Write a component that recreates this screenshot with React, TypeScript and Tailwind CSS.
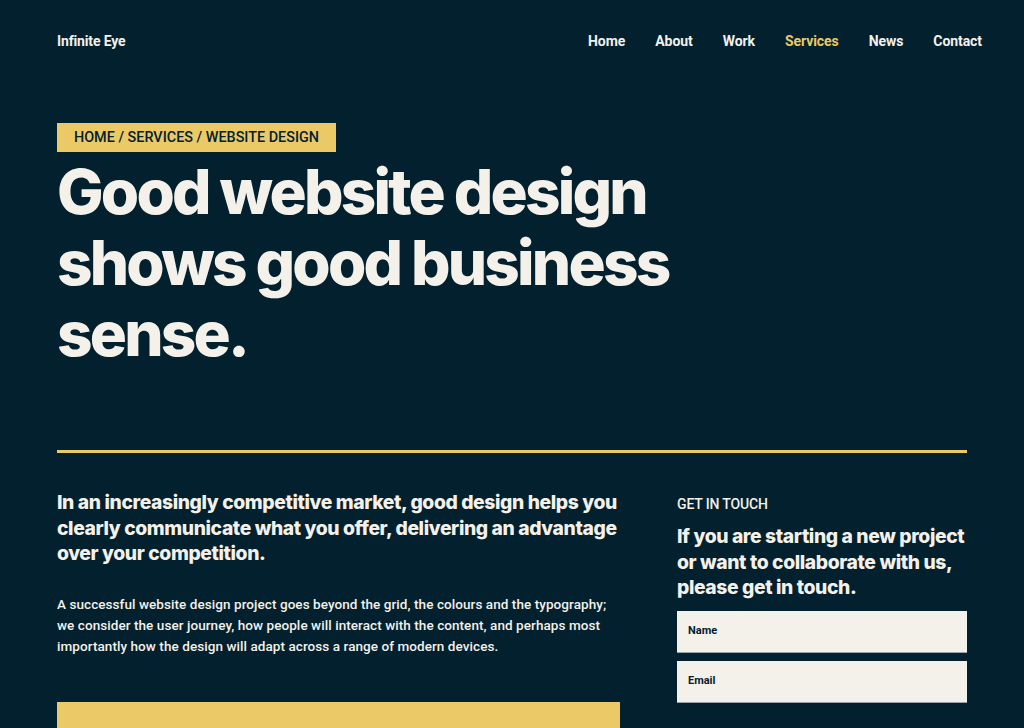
import React from 'react';

const navItems = ['Home', 'About', 'Work', 'Services', 'News', 'Contact'];

function App() {
    return (
        <div className="min-h-screen bg-[#02202e] text-[#f4f1ea] font-['Roboto',sans-serif] overflow-hidden">
            <header className="flex items-center justify-between pl-[57px] pr-[42px] pt-[31px] h-[52px]">
                <a className="text-[14px] font-bold tracking-[-0.01em]">Infinite Eye</a>
                <nav className="flex gap-[30px] text-[14px] font-bold tracking-[-0.005em]">
                    {navItems.map((item) => (
                        <a key={item} className={item === 'Services' ? 'text-[#ecc967]' : ''}>
                            {item}
                        </a>
                    ))}
                </nav>
            </header>

            <main className="px-[57px]">
                <section className="pt-[71px]">
                    <div className="inline-block bg-[#ecc967] text-[#02202e] text-[14.4px] font-medium uppercase px-[17px] h-[29px] leading-[29px]">
                        Home / Services / Website Design
                    </div>
                    <h1 className="mt-[4px] font-['Inter',sans-serif] font-extrabold text-[62px] leading-[71px] tracking-[-0.045em] max-w-[640px]">
                        Good website design shows good business sense.
                    </h1>
                </section>

                <div className="mt-[81px] h-[3px] bg-[#ecc967]" />

                <section className="grid grid-cols-[563px_290px] gap-[57px] pt-[37px]">
                    <div>
                        <p className="font-['Inter',sans-serif] font-extrabold text-[19.3px] leading-[25.5px] tracking-[-0.02em]">
                            In an increasingly competitive market, good design helps you clearly communicate what you offer, delivering an advantage over your competition.
                        </p>
                        <p className="mt-[27px] text-[13.5px] leading-[21px] font-medium tracking-[0.005em]">
                            A successful website design project goes beyond the grid, the colours and the typography; we consider the user journey, how people will interact with the content, and perhaps most importantly how the design will adapt across a range of modern devices.
                        </p>
                        <div className="mt-[45px] h-[80px] bg-[#ecc967]" />
                    </div>

                    <aside className="pt-[4px]">
                        <h2 className="text-[14px] font-medium uppercase tracking-[-0.01em]">Get in touch</h2>
                        <p className="mt-[9px] font-['Inter',sans-serif] font-extrabold text-[19.3px] leading-[25.5px] tracking-[-0.02em]">
                            If you are starting a new project or want to collaborate with us, please get in touch.
                        </p>
                        <form className="mt-[10px] flex flex-col gap-[8px]">
                            <label className="h-[42px] bg-[#f4f1ea] text-[#02202e] text-[11px] font-bold flex items-center px-[11px] border-b border-[#9aa3a7]">
                                Name
                            </label>
                            <label className="h-[42px] bg-[#f4f1ea] text-[#02202e] text-[11px] font-bold flex items-center px-[11px] border-b border-[#9aa3a7]">
                                Email
                            </label>
                        </form>
                    </aside>
                </section>
            </main>
        </div>
    );
}

export default App;
